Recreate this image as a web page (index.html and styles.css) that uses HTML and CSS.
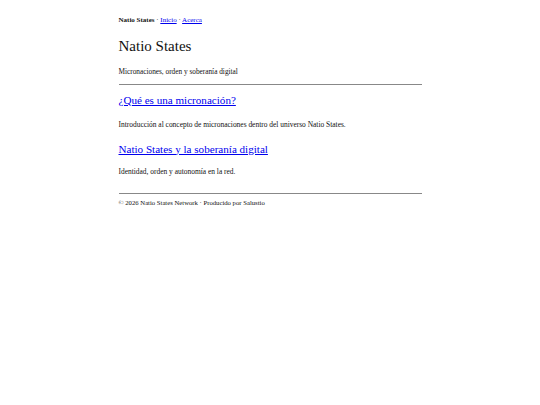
FILE: index.html
```html
<!DOCTYPE html>
<html lang="es">
<head>
<meta charset="utf-8">
<title>Natio States</title>
<link rel="stylesheet" href="styles.css">
</head>
<body>
<div class="page">
  <nav class="nav"><strong>Natio States</strong> · <a href="#">Inicio</a> · <a href="#">Acerca</a></nav>
  <header class="header">
    <h1 class="title">Natio States</h1>
    <p class="tagline">Micronaciones, orden y soberanía digital</p>
  </header>
  <main class="posts">
    <article class="post">
      <h2 class="post-title"><a href="#">¿Qué es una micronación?</a></h2>
      <p class="post-summary">Introducción al concepto de micronaciones dentro del universo Natio States.</p>
    </article>
    <article class="post">
      <h2 class="post-title"><a href="#">Natio States y la soberanía digital</a></h2>
      <p class="post-summary">Identidad, orden y autonomía en la red.</p>
    </article>
  </main>
  <footer class="footer">© 2026 Natio States Network · Producido por Salustio</footer>
</div>
</body>
</html>
```
FILE: styles.css
```css
html, body {
  margin: 0;
  padding: 0;
  background: #fff;
}
body {
  font-family: "Liberation Serif", Georgia, serif;
  color: #111;
  font-size: 7.3px;
  line-height: 10px;
}
.page {
  max-width: 303px;
  margin: 0 auto;
  padding-top: 16px;
}
a { color: #0000ee; }
.nav {
  font-size: 7px;
  line-height: 9px;
}
.header {
  border-bottom: 1px solid #888;
  padding-bottom: 7px;
}
.title {
  font-size: 15px;
  font-weight: normal;
  line-height: 18px;
  margin: 12px 0 0;
}
.tagline {
  margin: 12px 0 0;
}
.post-title {
  font-size: 11.1px;
  font-weight: normal;
  line-height: 14px;
  margin: 8px 0 0;
}
.post-summary {
  font-size: 7.45px;
  margin: 12.5px 0 0;
}
.post + .post .post-title { margin-top: 12px; }
.post + .post .post-summary { margin-top: 11.5px; }
.footer {
  margin-top: 16px;
  border-top: 1px solid #888;
  padding-top: 4px;
  font-size: 6.7px;
  line-height: 9px;
}
```
